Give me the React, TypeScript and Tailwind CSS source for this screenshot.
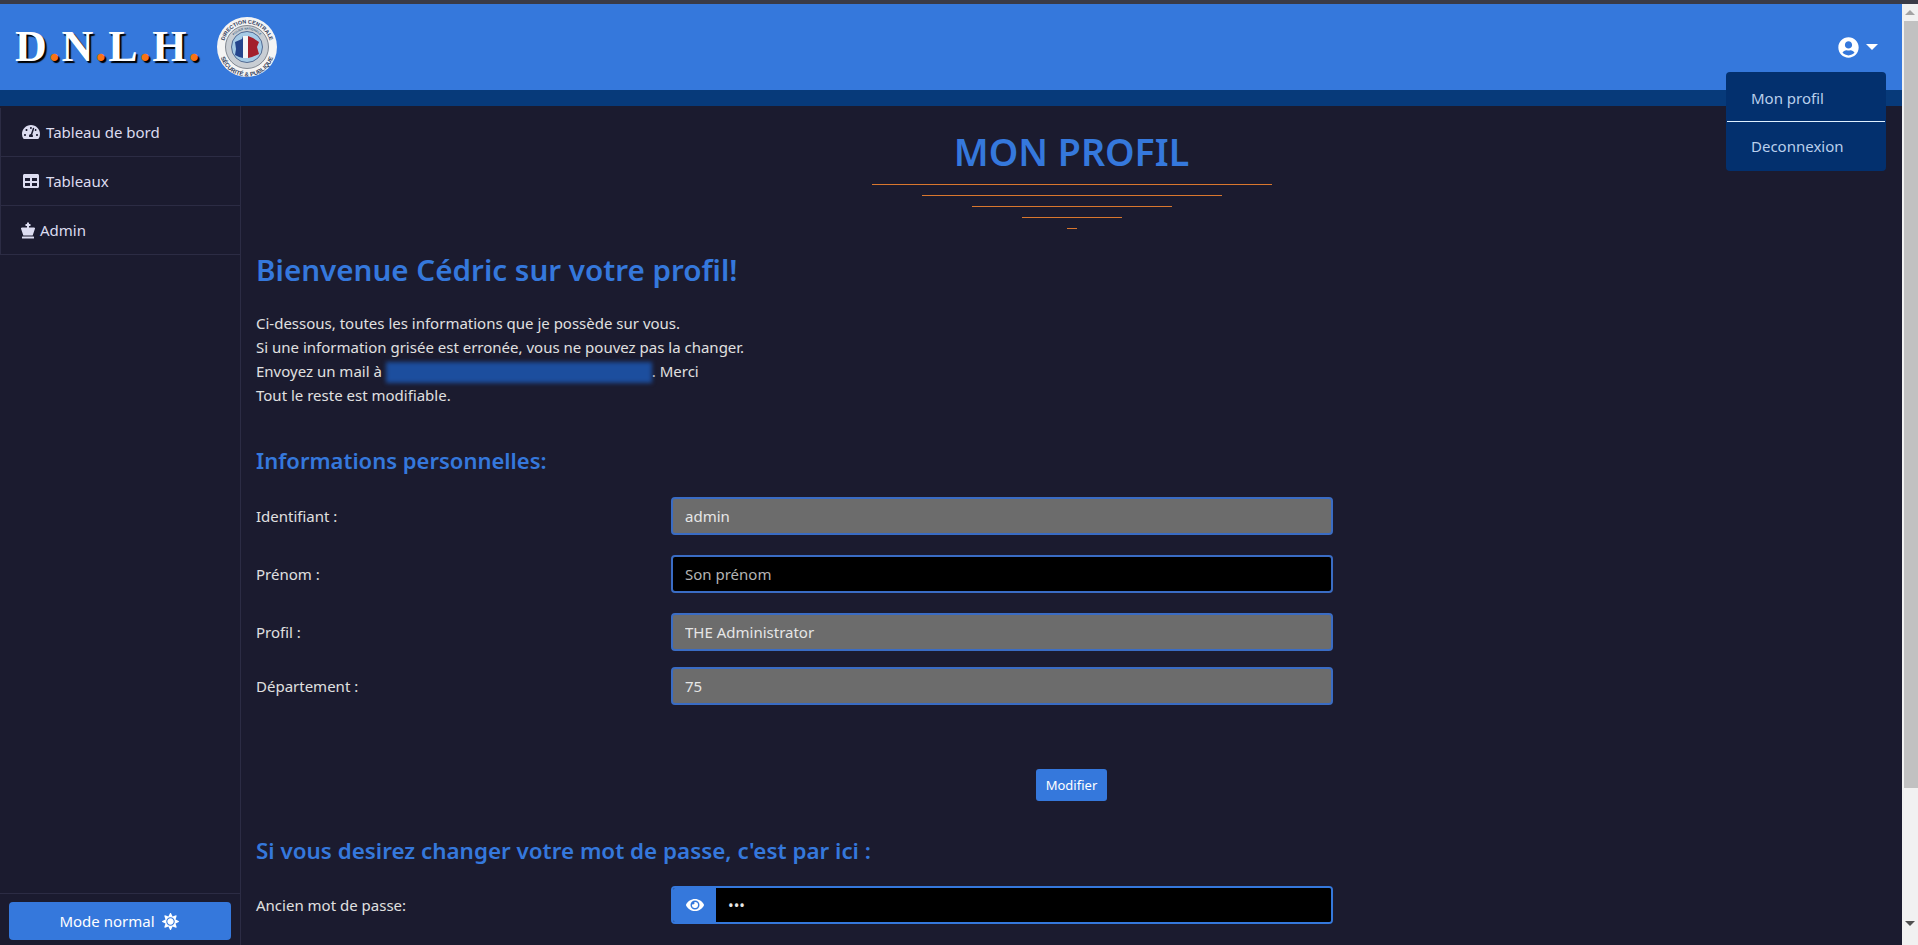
import { FaChessKing, FaEye, FaSun, FaTable, FaTachometerAlt, FaUserCircle } from 'react-icons/fa';

const Logo = () => (
  <svg viewBox="0 0 60 60" className="w-[60px] h-[60px] ml-[16px] shrink-0">
    <defs>
      <path id="arcTop" d="M6.5 30a23.5 23.5 0 0 1 47 0" />
      <path id="arcBottom" d="M2.5 32a27.5 27.5 0 0 0 55 0" />
      <path id="arcInner" d="M12.5 30a17.5 17.5 0 0 1 35 0" />
    </defs>
    <circle cx="30" cy="30" r="30" fill="#f4f4f4" />
    <circle cx="30" cy="30" r="21.5" fill="#c9ced4" stroke="#59606c" strokeWidth="0.7" />
    <circle cx="30" cy="30" r="15.5" fill="#a7cbe6" stroke="#38507c" strokeWidth="0.8" />
    <text fontSize="5.4" fontWeight="700" fill="#33405c" fontFamily="'Liberation Sans', sans-serif">
      <textPath href="#arcTop" startOffset="50%" textAnchor="middle">DIRECTION CENTRALE</textPath>
    </text>
    <text fontSize="6" fontWeight="700" fill="#33405c" fontFamily="'Liberation Sans', sans-serif">
      <textPath href="#arcBottom" startOffset="50%" textAnchor="middle">SÉCURITÉ &amp; PUBLIQUE</textPath>
    </text>
    <text fontSize="3" fontWeight="700" fill="#3d5f80" fontFamily="'Liberation Sans', sans-serif">
      <textPath href="#arcInner" startOffset="50%" textAnchor="middle">POLICE NATIONALE</textPath>
    </text>
    <path d="M18 25l7-3 1-3v22l-4-1-4-2 1-6z" fill="#24448c" />
    <path d="M26 19h5v22h-5z" fill="#f5f5f5" />
    <path d="M31 19l5 2 6 4-2 5 2 7-7 3-4 1z" fill="#a3202c" />
  </svg>
);

const Dot = () => <span className="text-[#f97316]">.</span>;

const Navbar = () => (
  <header className="h-[86px] bg-[#3578dc] flex items-center justify-between pl-[15px] pr-6 shrink-0">
    <div className="flex items-center">
      <span className="font-['Liberation_Serif',serif] font-bold text-[44px] leading-none tracking-[1.9px] text-white [text-shadow:2px_2px_1px_#000]">
        D<Dot />N<Dot />L<Dot />H<Dot />
      </span>
      <Logo />
    </div>
    <button className="flex items-center text-white">
      <FaUserCircle className="w-[21px] h-[21px]" />
      <span className="ml-[7px] w-0 h-0 border-x-[6px] border-x-transparent border-t-[6px] border-t-white" />
    </button>
  </header>
);

const navItems = [
  { label: 'Tableau de bord', icon: <FaTachometerAlt className="w-[18px] h-[16px]" />, pad: 'pl-[21px]' },
  { label: 'Tableaux', icon: <FaTable className="w-[16px] h-[16px] mx-px" />, pad: 'pl-[21px]' },
  { label: 'Admin', icon: <FaChessKing className="w-[14px] h-[17px] -mr-px" />, pad: 'pl-[20px]' },
];

const Sidebar = () => (
  <aside className="w-[241px] shrink-0 flex flex-col justify-between border-r border-[#2c2c44] pt-[2px]">
    <nav className="border-l border-[#2c2c44]">
      {navItems.map((item) => (
        <a key={item.label} className={`h-[49px] flex items-center gap-[6px] border-b border-[#2c2c44] text-[15px] text-[#dcdcf0] ${item.pad}`}>
          {item.icon}
          {item.label}
        </a>
      ))}
    </nav>
    <div className="h-[52px] border-t border-[#2c2c44] pt-[8px] pl-[9px]">
      <button className="w-[222px] h-[38px] bg-[#3578dc] rounded-[4px] text-white text-[15px] pr-[2px] flex items-center justify-center gap-[7px]">
        Mode normal
        <FaSun className="w-[17px] h-[17px]" />
      </button>
    </div>
  </aside>
);

const Field = ({ label, value, locked, mb }: { label: string; value: string; locked?: boolean; mb: string }) => (
  <div className={`flex items-center ${mb}`}>
    <label className="w-[415px] text-[15px]">{label}</label>
    <input
      readOnly
      value={locked ? value : ''}
      placeholder={value}
      className={`w-[662px] h-[38px] px-[12px] border-2 border-[#3a6cc4] rounded-[4px] text-[15px] text-[#e6e6e6] placeholder:text-[#b4b4b4] outline-none ${locked ? 'bg-[#6c6c6c]' : 'bg-black'}`}
    />
  </div>
);

const Scrollbar = () => (
  <div className="w-4 shrink-0 bg-[#f1f1f1] flex flex-col items-center relative">
    <span className="mt-[6px] w-0 h-0 border-x-[5px] border-x-transparent border-b-[5px] border-b-[#a3a3a3]" />
    <div className="mt-[6px] ml-px w-[14px] h-[767px] bg-[#c1c1c1]" />
    <span className="mt-[133px] w-0 h-0 border-x-[5px] border-x-transparent border-t-[5px] border-t-[#505050]" />
  </div>
);

const App = () => (
  <div className="h-[945px] overflow-hidden flex flex-col bg-[#1b1b2f] text-[#e0e0e0] font-['Noto_Sans',sans-serif] relative">
    <div className="h-1 bg-[#3a3b47] shrink-0" />
    <div className="flex flex-1 min-h-0">
      <div className="flex-1 min-w-0 flex flex-col">
        <Navbar />
        <div className="h-4 bg-[#073a7a] shrink-0" />
        <div className="flex flex-1 min-h-0">
          <Sidebar />
          <main className="flex-1 min-w-0 px-[15px] overflow-hidden">
            <h1 className="pt-[23px] text-center text-[37.6px] leading-[46px] font-semibold text-[#3578dc]">MON PROFIL</h1>
            <div className="mt-[9px] flex flex-col items-center gap-[10px]">
              <div className="w-[400px] h-px bg-[#d9772e]" />
              <div className="w-[300px] h-px bg-[#d9772e]" />
              <div className="w-[200px] h-px bg-[#d9772e]" />
              <div className="w-[100px] h-px bg-[#d9772e]" />
              <div className="w-[10px] h-px bg-[#d9772e]" />
            </div>

            <h2 className="mt-[22px] text-[29.6px] leading-[38px] font-semibold text-[#3578dc]">Bienvenue Cédric sur votre profil!</h2>
            <p className="mt-[22px] text-[15px] leading-6">
              Ci-dessous, toutes les informations que je possède sur vous.<br />
              Si une information grisée est erronée, vous ne pouvez pas la changer.<br />
              Envoyez un mail à <span className="inline-block w-[266px] h-[21px] align-middle bg-[#1c4e9e] blur-[2px]" />. Merci<br />
              Tout le reste est modifiable.
            </p>

            <h3 className="mt-[39px] text-[22px] leading-[29px] font-semibold text-[#3578dc]">Informations personnelles:</h3>
            <div className="mt-[22px]">
              <Field label="Identifiant :" value="admin" locked mb="mb-5" />
              <Field label="Prénom :" value="Son prénom" mb="mb-5" />
              <Field label="Profil :" value="THE Administrator" locked mb="mb-4" />
              <Field label="Département :" value="75" locked mb="mb-0" />
            </div>
            <div className="mt-16 flex justify-center">
              <button className="w-[71px] h-[32px] bg-[#3578dc] rounded-[3px] text-white text-[13px]">Modifier</button>
            </div>

            <h3 className="mt-[35px] text-[22.4px] leading-[29px] font-semibold text-[#3578dc]">Si vous desirez changer votre mot de passe, c'est par ici :</h3>
            <div className="mt-[21px] flex items-center">
              <label className="w-[415px] text-[15px]">Ancien mot de passe:</label>
              <div className="w-[662px] h-[38px] flex border-2 border-[#3578dc] rounded-[4px] overflow-hidden">
                <span className="w-[43px] bg-[#3578dc] flex items-center justify-center text-white">
                  <FaEye className="w-[18px] h-[16px]" />
                </span>
                <input readOnly type="password" value="abc" className="flex-1 bg-black px-3 text-[15px] text-[#e6e6e6] outline-none" />
              </div>
            </div>
          </main>
        </div>
      </div>
      <Scrollbar />
    </div>

    {/* Open user menu */}
    <div className="absolute left-[1726px] top-[72px] w-[160px] h-[99px] bg-[#03306e] rounded-[4px] px-px text-[15px] text-[#b9cfec]">
      <a className="h-[50px] pt-[3px] flex items-center pl-[24px] border-b border-[#dff0ff]">Mon profil</a>
      <a className="h-[49px] flex items-center pl-[24px]">Deconnexion</a>
    </div>
  </div>
);

export default App;
